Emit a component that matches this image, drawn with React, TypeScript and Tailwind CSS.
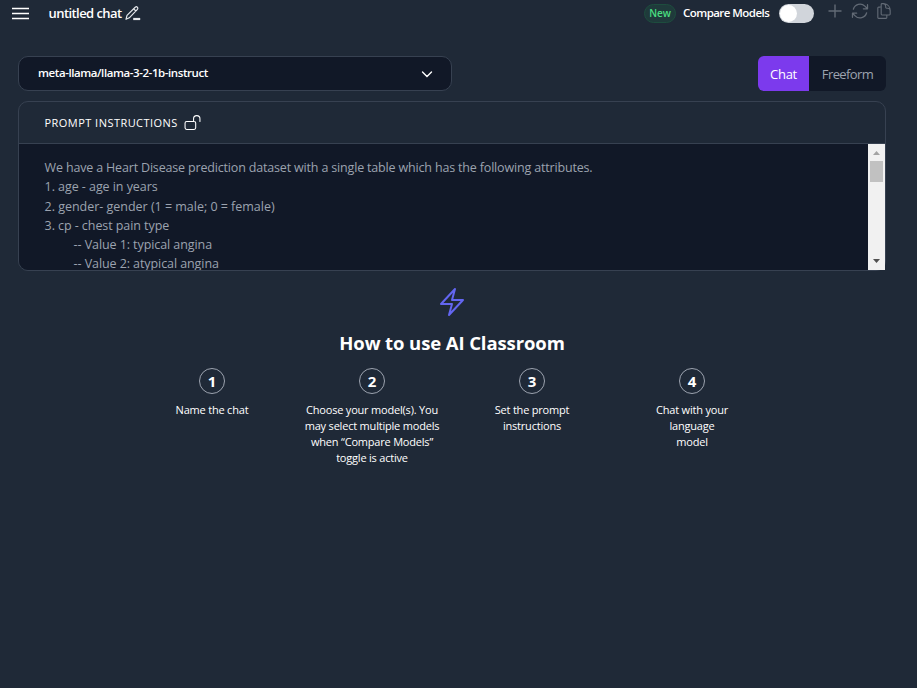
import type { ReactNode } from "react";
import { HiOutlineArrowPath, HiOutlineBolt, HiOutlineDocumentDuplicate, HiOutlineLockOpen } from "react-icons/hi2";

const steps: { n: number; lines: string[] }[] = [
  { n: 1, lines: ["Name the chat"] },
  { n: 2, lines: ["Choose your model(s). You", "may select multiple models", "when “Compare Models”", "toggle is active"] },
  { n: 3, lines: ["Set the prompt", "instructions"] },
  { n: 4, lines: ["Chat with your", "language", "model"] },
];

function Line({ children, className = "" }: { children: ReactNode; className?: string }) {
  return <div className={`whitespace-pre ${className}`}>{children}</div>;
}

function Header() {
  return (
    <header className="flex h-[26px] items-center">
      <svg className="ml-3 h-[13px] w-[17px] text-white" viewBox="0 0 17 13" stroke="currentColor" strokeWidth="1.5">
        <path d="M0 1.5h17M0 6.5h17M0 11.5h17" />
      </svg>
      <h1 className="ml-[19.5px] w-[76px] whitespace-nowrap pt-px text-[13px] font-semibold tracking-[-0.56px] text-white">untitled chat</h1>
      <svg className="h-[15px] w-[16px] text-gray-200" viewBox="0 0 16 15" fill="none" stroke="currentColor" strokeWidth="1.2" strokeLinejoin="round">
        <path d="M1 13.3 2 9.4 10.2 1.3a1.5 1.5 0 0 1 2.2 2.1L4.3 11.8 1 13.3ZM8.7 2.8l2.2 2.2" />
        <path d="M8.2 13h7" strokeWidth="2.2" />
      </svg>
      <span className="ml-auto flex h-[19px] w-8 items-center justify-center rounded-full border border-[#1d4d3e] bg-[#1f3a3b] text-[10px] font-semibold text-[#4ade80]">
        New
      </span>
      <span className="ml-[7px] w-[96px] whitespace-nowrap text-[11.5px] font-semibold tracking-[-0.55px] text-white">Compare Models</span>
      <button className="flex h-[19px] w-[35px] items-center rounded-full bg-[#d1d5db] px-[1px]">
        <span className="h-[17px] w-[17px] rounded-full bg-white" />
      </button>
      <div className="mb-[5px] ml-[14px] mr-[24px] flex items-center text-[#626a75]">
        <svg className="h-[14px] w-[14px]" viewBox="0 0 14 14" stroke="currentColor" strokeWidth="1.4">
          <path d="M7 .5v13M.5 7h13" />
        </svg>
        <HiOutlineArrowPath className="ml-[8px] h-5 w-5" />
        <HiOutlineDocumentDuplicate className="ml-[5px] h-[18px] w-[18px]" />
      </div>
    </header>
  );
}

function ScrollBar() {
  return (
    <div className="flex w-[17px] flex-col items-center bg-[#f1f1f1]">
      <svg className="h-[17px] w-[17px]" viewBox="0 0 17 17" fill="#a3a3a3">
        <path d="M5 11h7L8.5 7z" />
      </svg>
      <div className="h-[21px] w-[13px] bg-[#c1c1c1]" />
      <svg className="mt-auto h-[17px] w-[17px]" viewBox="0 0 17 17" fill="#505050">
        <path d="M5 6h7l-3.5 4z" />
      </svg>
    </div>
  );
}

export default function App() {
  return (
    <main className="h-[688px] w-[917px] overflow-hidden bg-[#1f2937] font-['Open_Sans','Noto_Sans',sans-serif]">
      <Header />
      <div className="mx-[18px] mt-[30px] flex w-[868px] justify-between">
        <div className="flex h-[35px] w-[434px] items-center justify-between rounded-[10px] border border-[#374151] bg-[#111827] pl-[19px] pr-[18px] text-white">
          <span className="whitespace-nowrap pb-px text-[11.5px] font-semibold tracking-[-0.42px]">meta-llama/llama-3-2-1b-instruct</span>
          <svg className="h-[12px] w-[12px]" viewBox="0 0 12 12" fill="none" stroke="currentColor" strokeWidth="1.4" strokeLinecap="round">
            <path d="m1.5 4 4.5 4.5L10.5 4" />
          </svg>
        </div>
        <div className="flex h-[35px] w-32 overflow-hidden rounded-md text-[13px]">
          <button className="w-[51px] bg-[#7c3aed] pt-0.5 tracking-[-0.3px] text-white">Chat</button>
          <button className="w-[77px] bg-[#111827] pt-0.5 tracking-[-0.6px] text-[#9ca3af]">Freeform</button>
        </div>
      </div>

      <section className="mx-[18px] mt-[10px] h-[170px] w-[868px] rounded-[10px] border border-[#374151]">
        <div className="flex h-[42px] items-center border-b border-[#374151] pl-[25.5px] text-white">
          <h2 className="w-[139px] whitespace-nowrap pt-0.5 text-[11px] tracking-[0.46px]">PROMPT INSTRUCTIONS</h2>
          <HiOutlineLockOpen className="h-[17px] w-[17px]" />
        </div>
        <div className="flex h-[126px] overflow-hidden rounded-bl-[9px] bg-[#111827]">
          <div className="flex-1 overflow-hidden pl-[25.6px] pt-[14px] text-[12.5px] leading-[19.25px] text-[#9ca3af]">
            <Line className="tracking-[-0.17px]">We have a Heart Disease prediction dataset with a single table which has the following attributes.</Line>
            <Line className="tracking-[-0.06px]">1. age - age in years</Line>
            <Line className="tracking-[-0.02px]">2. gender- gender (1 = male; 0 = female)</Line>
            <Line className="tracking-[-0.07px]">3. cp - chest pain type</Line>
            <Line className="pl-[29px] tracking-[-0.08px]">-- Value 1: typical angina</Line>
            <Line className="pl-[29px] tracking-[-0.08px]">-- Value 2: atypical angina</Line>
          </div>
          <ScrollBar />
        </div>
      </section>

      <section className="ml-[132px] flex w-[640px] flex-col items-center pt-[15px] text-white">
        <HiOutlineBolt className="h-8 w-8 text-[#6366f1]" />
        <h2 className="mt-[11px] whitespace-nowrap text-[18.5px] font-bold leading-7 tracking-[-0.1px]">How to use AI Classroom</h2>
        <div className="mt-[11px] flex">
          {steps.map((step) => (
            <div key={step.n} className="flex w-40 flex-col items-center">
              <div className="flex h-[26px] w-[26px] items-center justify-center rounded-full border border-[#9ca3af] pt-px text-[15px] font-bold">{step.n}</div>
              <div className="mt-2 text-center text-[11px] leading-4 tracking-[-0.2px]">
                {step.lines.map((line) => (
                  <Line key={line}>{line}</Line>
                ))}
              </div>
            </div>
          ))}
        </div>
      </section>
    </main>
  );
}
